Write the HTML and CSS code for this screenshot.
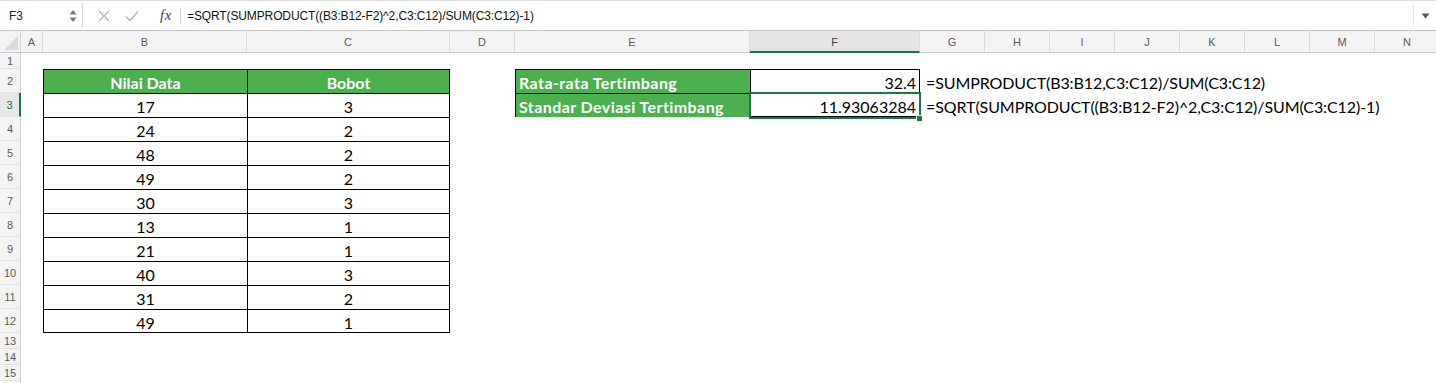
FILE: index.html
```html
<!DOCTYPE html>
<html lang="id">
<head>
<meta charset="utf-8">
<title>Standar Deviasi Tertimbang</title>
<link rel="stylesheet" href="styles.css">
</head>
<body>
<div class="app">
  <div class="formula-bar">
    <div class="name-box">
      <span class="name">F3</span>
      <span class="spin">
        <svg width="8" height="14" viewBox="0 0 8 14"><path d="M4 1 L7.5 5.5 L0.5 5.5 Z" fill="#7a7a7a"/><path d="M4 13 L7.5 8.5 L0.5 8.5 Z" fill="#7a7a7a"/></svg>
      </span>
    </div>
    <div class="tools">
      <svg class="tool-x" width="12" height="12" viewBox="0 0 12 12"><path d="M1 1 L11 11 M11 1 L1 11" stroke="#b4b4b4" stroke-width="1.3" fill="none"/></svg>
      <svg class="tool-ok" width="14" height="12" viewBox="0 0 14 12"><path d="M1 6.5 L5 10.5 L13 1.5" stroke="#b4b4b4" stroke-width="1.3" fill="none"/></svg>
      <span class="fx">fx</span>
      <span class="sep"></span>
    </div>
    <div class="formula-input">=SQRT(SUMPRODUCT((B3:B12-F2)^2,C3:C12)/SUM(C3:C12)-1)</div>
    <div class="expand">
      <svg width="9" height="6" viewBox="0 0 9 6"><path d="M0.5 0.5 L8.5 0.5 L4.5 5.5 Z" fill="#555"/></svg>
    </div>
  </div>

  <div class="sheet">
    <div class="corner"><svg width="14" height="14" viewBox="0 0 14 14"><path d="M14 0 L14 14 L0 14 Z" fill="#d9d9d9"/></svg></div>
    <div class="ch">A</div>
    <div class="ch">B</div>
    <div class="ch">C</div>
    <div class="ch">D</div>
    <div class="ch">E</div>
    <div class="ch ch-sel">F</div>
    <div class="ch">G</div>
    <div class="ch">H</div>
    <div class="ch">I</div>
    <div class="ch">J</div>
    <div class="ch">K</div>
    <div class="ch">L</div>
    <div class="ch">M</div>
    <div class="ch">N</div>

    <div class="rh">1</div>
    <div class="rh">2</div>
    <div class="rh rh-sel">3</div>
    <div class="rh">4</div>
    <div class="rh">5</div>
    <div class="rh">6</div>
    <div class="rh">7</div>
    <div class="rh">8</div>
    <div class="rh">9</div>
    <div class="rh">10</div>
    <div class="rh">11</div>
    <div class="rh">12</div>
    <div class="rh">13</div>
    <div class="rh">14</div>
    <div class="rh">15</div>
    <div class="rh"></div>

    <div class="data-block">
      <div class="cell head">Nilai Data</div><div class="cell head">Bobot</div>
      <div class="cell num">17</div><div class="cell num">3</div>
      <div class="cell num">24</div><div class="cell num">2</div>
      <div class="cell num">48</div><div class="cell num">2</div>
      <div class="cell num">49</div><div class="cell num">2</div>
      <div class="cell num">30</div><div class="cell num">3</div>
      <div class="cell num">13</div><div class="cell num">1</div>
      <div class="cell num">21</div><div class="cell num">1</div>
      <div class="cell num">40</div><div class="cell num">3</div>
      <div class="cell num">31</div><div class="cell num">2</div>
      <div class="cell num">49</div><div class="cell num">1</div>
    </div>

    <div class="stats-block">
      <div class="cell label">Rata-rata Tertimbang</div><div class="cell value">32.4</div>
      <div class="cell label">Standar Deviasi Tertimbang</div><div class="cell value active">11.93063284<span class="handle"></span></div>
    </div>

    <div class="formulas">
      <div class="ftext">=SUMPRODUCT(B3:B12,C3:C12)/SUM(C3:C12)</div>
      <div class="ftext">=SQRT(SUMPRODUCT((B3:B12-F2)^2,C3:C12)/SUM(C3:C12)-1)</div>
    </div>
  </div>
</div>
</body>
</html>
```

FILE: styles.css
```css
html, body {
  margin: 0;
  padding: 0;
  background: #ffffff;
  overflow: hidden;
}

body {
  font-family: "Liberation Sans", Arial, sans-serif;
  color: #000;
}

.app {
  width: 1436px;
  height: 383px;
  overflow: hidden;
}

/* ---------- formula bar ---------- */
.formula-bar {
  display: flex;
  align-items: stretch;
  height: 31px;
  box-sizing: border-box;
  border-top: 1px solid #dedede;
  border-bottom: 1px solid #c4c4c4;
  background: #ffffff;
}

.name-box {
  width: 83px;
  box-sizing: border-box;
  display: flex;
  align-items: center;
  padding-left: 9px;
  border-right: 1px solid #d9d9d9;
  margin: 2px 0 2px 0;
}

.name {
  font-size: 12px;
  color: #222;
}

.spin {
  margin-left: auto;
  margin-right: 5px;
  display: flex;
}

.tools {
  width: 98px;
  display: flex;
  align-items: center;
}

.tool-x {
  margin-left: 15px;
}

.tool-ok {
  margin-left: 15px;
}

.fx {
  margin-left: 21px;
  font-family: "Liberation Serif", "Times New Roman", serif;
  font-style: italic;
  font-size: 15px;
  color: #444;
  letter-spacing: 0.5px;
}

.sep {
  margin-left: auto;
  width: 1px;
  height: 15px;
  background: #cfcfcf;
}

.formula-input {
  flex: 1;
  display: flex;
  align-items: center;
  padding-left: 6px;
  font-size: 12px;
  color: #111;
  letter-spacing: -0.12px;
  white-space: nowrap;
  border-right: 1px solid #e4e4e4;
  margin: 4px 0;
}

.expand {
  width: 22px;
  display: flex;
  align-items: center;
  justify-content: center;
}

/* ---------- sheet grid ---------- */
.sheet {
  display: grid;
  grid-template-columns: 21px 22px 204px 203px 65px 235px 170px repeat(8, 65px);
  grid-template-rows: 22px 16px repeat(11, 24px) repeat(5, 16px);
  width: 1500px;
}

.corner {
  background: #f3f3f3;
  border-right: 1px solid #d4d4d4;
  border-bottom: 1px solid #c9c9c9;
  display: flex;
  align-items: flex-end;
  justify-content: flex-end;
  padding: 0 2px 2px 0;
}

.ch {
  background: #f4f4f4;
  border-right: 1px solid #dadada;
  border-bottom: 1px solid #c9c9c9;
  display: flex;
  align-items: center;
  justify-content: center;
  font-size: 11px;
  color: #5a5a5a;
  padding-top: 1px;
}

.ch-sel {
  background: #e4e4e4;
  border-bottom: 2px solid #217346;
  color: #3c3c3c;
}

.rh {
  grid-column: 1;
  background: #f4f4f4;
  border-right: 1px solid #cfcfcf;
  border-bottom: 1px solid #e3e3e3;
  display: flex;
  align-items: center;
  justify-content: center;
  font-size: 11px;
  color: #5a5a5a;
  padding-top: 1px;
}

.rh-sel {
  background: #e6e6e6;
  border-right: 2px solid #217346;
  color: #217346;
}

/* ---------- cell blocks ---------- */
.data-block {
  grid-column: 3 / 5;
  grid-row: 3 / 14;
  display: grid;
  grid-template-columns: 204px 1fr;
  grid-auto-rows: 24px;
  border-right: 1px solid #000;
  border-bottom: 1px solid #000;
}

.stats-block {
  grid-column: 6 / 8;
  grid-row: 3 / 5;
  display: grid;
  grid-template-columns: 235px 1fr;
  grid-auto-rows: 24px;
  border-right: 1px solid #000;
  border-bottom: 1px solid #000;
}

.cell {
  border-left: 1px solid #000;
  border-top: 1px solid #000;
  display: flex;
  align-items: center;
  font-family: Lato, "Open Sans", sans-serif;
  font-size: 16px;
  line-height: 1;
  padding-top: 2px;
  white-space: nowrap;
  position: relative;
}

.head {
  background: #4caf50;
  color: #ffffff;
  font-weight: 700;
  justify-content: center;
}

.num {
  justify-content: center;
  color: #000;
}

.label {
  background: #4caf50;
  color: #ffffff;
  font-weight: 700;
  padding-left: 3px;
  letter-spacing: 0.42px;
}

.value {
  justify-content: flex-end;
  padding-right: 3px;
  color: #000;
}

.active::after {
  content: "";
  position: absolute;
  left: -2px;
  top: -2px;
  right: -2px;
  bottom: -2px;
  border: 2px solid #217346;
  pointer-events: none;
}

.handle {
  position: absolute;
  right: -4px;
  bottom: -5px;
  width: 5px;
  height: 5px;
  background: #217346;
  border: 1px solid #ffffff;
  z-index: 2;
}

.formulas {
  grid-column: 8 / 16;
  grid-row: 3 / 5;
  display: grid;
  grid-auto-rows: 24px;
}

.ftext {
  display: flex;
  align-items: center;
  padding-left: 6px;
  padding-top: 3px;
  font-family: Lato, "Open Sans", sans-serif;
  font-size: 16px;
  line-height: 1;
  letter-spacing: -0.09px;
  white-space: nowrap;
  color: #000;
}
```
